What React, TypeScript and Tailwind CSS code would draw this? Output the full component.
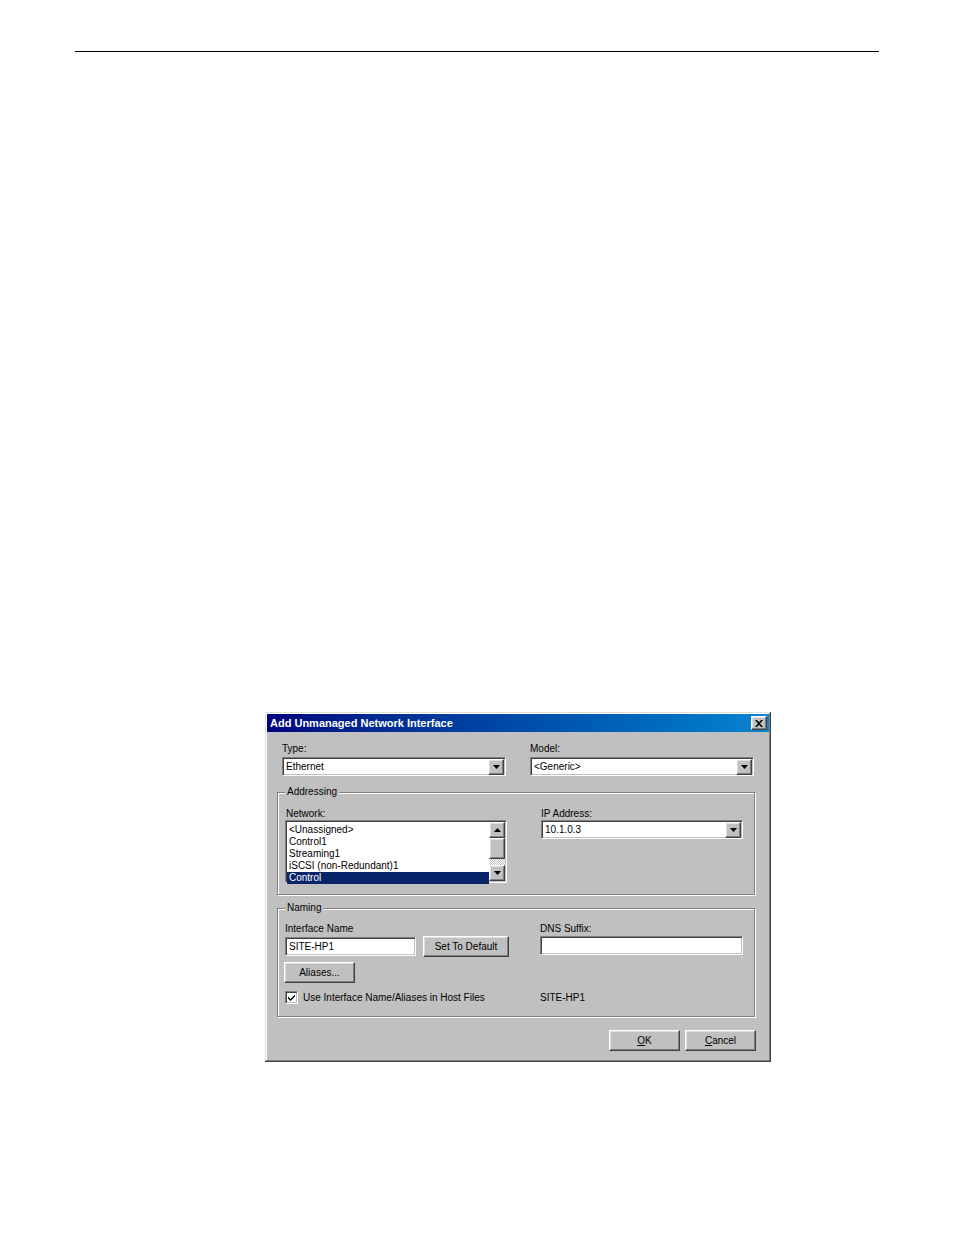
import React from "react"

// Win98-style bevels
const sunken =
  "border border-t-[#808080] border-l-[#808080] border-b-white border-r-white shadow-[inset_1px_1px_0_#404040,inset_-1px_-1px_0_#c0c0c0]"
const raised =
  "border border-t-white border-l-white border-b-[#404040] border-r-[#404040] shadow-[inset_-1px_-1px_0_#808080,inset_1px_1px_0_#dfdfdf]"

function Arrow({ up = false }: { up?: boolean }) {
  return (
    <svg width="7" height="4" viewBox="0 0 7 4" className={up ? "rotate-180" : ""}>
      <path d="M0 0h7L3.5 4z" fill="#000" />
    </svg>
  )
}

function ArrowButton({ up = false, className = "" }: { up?: boolean; className?: string }) {
  return (
    <div className={`flex h-[16px] w-[16px] shrink-0 items-center justify-center bg-[#c0c0c0] ${raised} ${className}`}>
      <Arrow up={up} />
    </div>
  )
}

function Combo({ value, width }: { value: string; width: string }) {
  return (
    <div className={`flex h-[19px] items-center bg-white p-[1px] ${sunken} ${width}`}>
      <span className="flex-1 pl-[2px] leading-none">{value}</span>
      <ArrowButton />
    </div>
  )
}

function Button({ children, width }: { children: React.ReactNode; width: string }) {
  return (
    <div className={`flex h-[21px] items-center justify-center bg-[#c0c0c0] ${raised} ${width}`}>
      {children}
    </div>
  )
}

function Group({ label, children, className = "" }: { label: string; children: React.ReactNode; className?: string }) {
  return (
    <fieldset
      className={`mx-[10px] w-[478px] border border-[#808080] px-0 shadow-[inset_1px_1px_0_#fff,1px_1px_0_#fff] ${className}`}
    >
      <legend className="ml-[7px] bg-[#c0c0c0] px-[2px] leading-[12px]">{label}</legend>
      {children}
    </fieldset>
  )
}

export default function App() {
  const networks = ["<Unassigned>", "Control1", "Streaming1", "iSCSI (non-Redundant)1", "Control"]

  return (
    <div className="min-h-[1235px] w-[954px] bg-white font-['Liberation_Sans',Arial,sans-serif] text-[10px] text-black">
      <div className="mx-[75px] h-[52px] border-b-[1.5px] border-black" />

      <div className="ml-[265px] mt-[660px] h-[350px] w-[506px] bg-[#c0c0c0] p-[2px] shadow-[inset_-1px_-1px_0_#404040,inset_1px_1px_0_#dfdfdf,inset_-2px_-2px_0_#808080,inset_2px_2px_0_#fff]">
        {/* title bar */}
        <div className="flex h-[18px] items-center bg-gradient-to-r from-[#000080] to-[#1084d0] pl-[3px] pr-[2px]">
          <span className="flex-1 text-[11px] font-bold leading-none text-white">Add Unmanaged Network Interface</span>
          <div className={`flex h-[14px] w-[16px] items-center justify-center bg-[#c0c0c0] ${raised}`}>
            <svg width="8" height="7" viewBox="0 0 8 7">
              <path d="M0 0h2l2 2.2L6 0h2L5 3.5 8 7H6L4 4.8 2 7H0l3-3.5z" fill="#000" />
            </svg>
          </div>
        </div>

        {/* type / model */}
        <div className="mt-[11px] flex pl-[15px]">
          <div className="flex w-[248px] flex-col">
            <span className="leading-[12px]">Type:</span>
            <div className="mt-[2px]">
              <Combo value="Ethernet" width="w-[224px]" />
            </div>
          </div>
          <div className="flex flex-col">
            <span className="leading-[12px]">Model:</span>
            <div className="mt-[2px]">
              <Combo value="<Generic>" width="w-[224px]" />
            </div>
          </div>
        </div>

        {/* addressing */}
        <Group label="Addressing" className="mt-[10px] h-[109px] pt-[10px]">
          <div className="flex pl-[7px]">
            <div className="flex w-[256px] flex-col">
              <span className="pl-[1px] leading-[12px]">Network:</span>
              <div className={`flex h-[63px] w-[222px] bg-white p-[1px] ${sunken}`}>
                <div className="flex flex-1 flex-col pt-[2px]">
                  {networks.map((n, i) => (
                    <div
                      key={n}
                      className={`h-[12px] pl-[2px] leading-[12px] ${i === networks.length - 1 ? "bg-[#0a246a] text-white" : ""}`}
                    >
                      {n}
                    </div>
                  ))}
                </div>
                <div className="flex w-[16px] flex-col bg-[repeating-conic-gradient(#c0c0c0_0_25%,#fff_0_50%)] bg-[length:2px_2px]">
                  <ArrowButton up />
                  <div className={`h-[21px] w-[16px] bg-[#c0c0c0] ${raised}`} />
                  <div className="flex-1" />
                  <ArrowButton />
                </div>
              </div>
            </div>
            <div className="flex flex-col">
              <span className="leading-[12px]">IP Address:</span>
              <Combo value="10.1.0.3" width="w-[202px]" />
            </div>
          </div>
        </Group>

        {/* naming */}
        <Group label="Naming" className="mt-[7px] h-[115px] pt-[9px]">
          <div className="flex pl-[7px]">
            <div className="flex w-[255px] flex-col">
              <span className="leading-[12px]">Interface Name</span>
              <div className="mt-[1px] flex items-center">
                <div className={`flex h-[19px] w-[131px] items-center bg-white pl-[3px] ${sunken}`}>SITE-HP1</div>
                <div className="ml-[7px]">
                  <Button width="w-[86px]">Set To Default</Button>
                </div>
              </div>
              <div className="mt-[5px] -ml-[1px]">
                <Button width="w-[71px]">Aliases...</Button>
              </div>
            </div>
            <div className="flex flex-col">
              <span className="leading-[12px]">DNS Suffix:</span>
              <div className={`mt-[1px] h-[19px] w-[203px] bg-white ${sunken}`} />
            </div>
          </div>
          <div className="mt-[8px] flex items-center pl-[7px]">
            <div className={`flex h-[13px] w-[13px] items-center justify-center bg-white ${sunken}`}>
              <svg width="7" height="7" viewBox="0 0 7 7">
                <path d="M0 2.5l2.5 2.5L7 0.5v2L2.5 7 0 4.5z" fill="#000" />
              </svg>
            </div>
            <span className="ml-[5px] w-[237px] leading-[12px]">Use Interface Name/Aliases in Host Files</span>
            <span className="leading-[12px]">SITE-HP1</span>
          </div>
        </Group>

        {/* buttons */}
        <div className="mt-[13px] flex justify-end gap-[5px] pr-[13px]">
          <Button width="w-[71px]">
            <span className="underline">O</span>K
          </Button>
          <Button width="w-[71px]">
            <span className="underline">C</span>ancel
          </Button>
        </div>
      </div>
    </div>
  )
}
